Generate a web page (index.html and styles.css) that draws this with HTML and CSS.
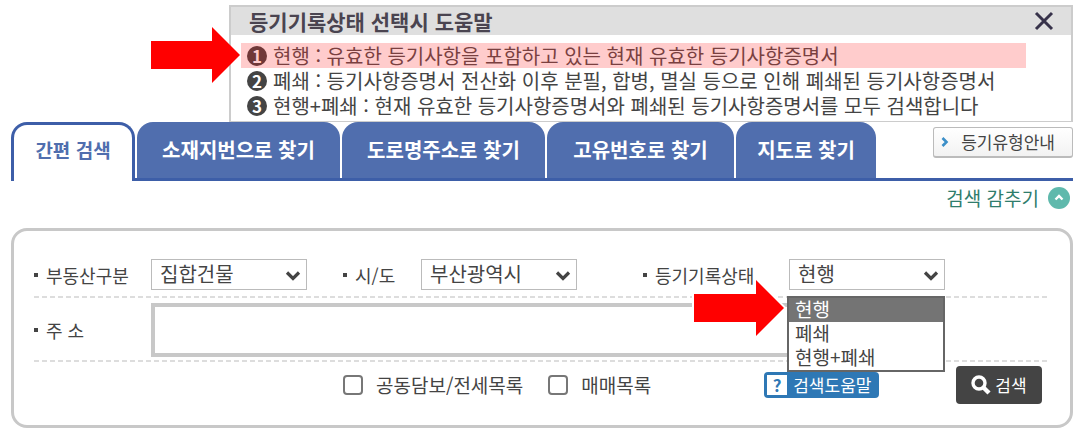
FILE: index.html
```html
<!DOCTYPE html>
<html lang="ko">
<head>
<meta charset="utf-8">
<title>부동산 등기 검색</title>
<link rel="stylesheet" href="styles.css">
</head>
<body>
<main class="page">
  <section class="help">
    <header class="help-head">
      <h2 class="help-title">등기기록상태 선택시 도움말</h2>
      <button class="close" type="button" aria-label="닫기">
        <svg width="20" height="20" viewBox="0 0 20 20"><path d="M2 2L18 18M18 2L2 18" fill="none" stroke="#37324a" stroke-width="3"/></svg>
      </button>
    </header>
    <ol class="help-list">
      <li class="help-item marked">
        <svg class="arrow arrow-help" width="90" height="58" viewBox="0 0 90 58"><path d="M0 15H61V1L89 29L61 57V43H0Z" fill="#f00"/></svg>
        <span class="num">1</span>현행 : 유효한 등기사항을 포함하고 있는 현재 유효한 등기사항증명서
      </li>
      <li class="help-item"><span class="num">2</span>폐쇄 : 등기사항증명서 전산화 이후 분필, 합병, 멸실 등으로 인해 폐쇄된 등기사항증명서</li>
      <li class="help-item"><span class="num">3</span>현행+폐쇄 : 현재 유효한 등기사항증명서와 폐쇄된 등기사항증명서를 모두 검색합니다</li>
    </ol>
  </section>

  <nav class="tabs">
    <a class="tab active" href="#simple">간편 검색</a>
    <a class="tab wide" href="#lot">소재지번으로 찾기</a>
    <a class="tab wide" href="#road">도로명주소로 찾기</a>
    <a class="tab medium" href="#number">고유번호로 찾기</a>
    <a class="tab narrow" href="#map">지도로 찾기</a>
    <button class="guide" type="button">
      <svg width="8" height="10" viewBox="0 0 8 10"><path d="M1.5 1L5.5 5L1.5 9" fill="none" stroke="#3c8fc8" stroke-width="2.6"/></svg>
      등기유형안내
    </button>
  </nav>

  <div class="toggle-row">
    <button class="toggle" type="button">
      검색 감추기
      <svg width="22" height="22" viewBox="0 0 22 22"><circle cx="11" cy="11" r="11" fill="#5fb9ac"/><path d="M7.5 12.5L11 9L14.5 12.5" fill="none" stroke="#fff" stroke-width="2.4"/></svg>
    </button>
  </div>

  <form class="panel">
    <div class="row row-filters">
      <label class="label label-main" for="kind">부동산구분</label>
      <span class="combo">
        <select id="kind"><option>집합건물</option></select>
        <svg class="chevron" width="16" height="12" viewBox="0 0 16 12"><path d="M2 2.5L8 8.5L14 2.5" fill="none" stroke="#444" stroke-width="3.2"/></svg>
      </span>
      <label class="label label-city" for="city">시/도</label>
      <span class="combo">
        <select id="city"><option>부산광역시</option></select>
        <svg class="chevron" width="16" height="12" viewBox="0 0 16 12"><path d="M2 2.5L8 8.5L14 2.5" fill="none" stroke="#444" stroke-width="3.2"/></svg>
      </span>
      <label class="label label-state" for="state">등기기록상태</label>
      <span class="combo">
        <select id="state"><option>현행</option><option>폐쇄</option><option>현행+폐쇄</option></select>
        <svg class="chevron" width="16" height="12" viewBox="0 0 16 12"><path d="M2 2.5L8 8.5L14 2.5" fill="none" stroke="#444" stroke-width="3.2"/></svg>
        <ul class="menu" role="listbox" aria-label="등기기록상태">
          <li class="option selected" role="option" aria-selected="true">현행</li>
          <li class="option" role="option" aria-selected="false">폐쇄</li>
          <li class="option" role="option" aria-selected="false">현행+폐쇄</li>
        </ul>
        <svg class="arrow arrow-menu" width="94" height="62" viewBox="0 0 94 62"><path d="M2 17H64V3L92 31L64 59V45H2Z" fill="#f00" stroke="#fff" stroke-width="4" paint-order="stroke"/></svg>
      </span>
    </div>
    <div class="row row-address">
      <label class="label label-main" for="address">주 소</label>
      <input class="address" id="address" type="text">
    </div>
    <div class="actions">
      <label class="check"><input type="checkbox">공동담보/전세목록</label>
      <label class="check"><input type="checkbox">매매목록</label>
      <button class="tip" type="button"><span class="tip-mark">?</span>검색도움말</button>
      <button class="search" type="submit">
        <svg width="20" height="20" viewBox="0 0 20 20"><circle cx="8" cy="8" r="6" fill="none" stroke="#fff" stroke-width="3.4"/><path d="M12.2 12.2L18 18" stroke="#fff" stroke-width="4.4"/></svg>
        검색
      </button>
    </div>
  </form>
</main>
</body>
</html>
```

FILE: styles.css
```css
* {
  box-sizing: border-box;
}

body {
  margin: 0;
  background: #fff;
  color: #444;
  font-family: "Noto Sans CJK KR", sans-serif;
  font-size: 18px;
  line-height: 24px;
}

button,
input,
select {
  font-family: inherit;
  line-height: inherit;
  color: inherit;
  margin: 0;
}

button {
  cursor: pointer;
  white-space: nowrap;
}

svg {
  flex: none;
}

.page {
  padding: 5px 11px 7px;
}

/* Help box */
.help {
  margin-left: 218px;
  border: 2px solid #ccc;
  border-bottom-width: 1px;
}

.help-head {
  display: flex;
  align-items: center;
  justify-content: space-between;
  height: 28px;
  padding: 0 17px 0 18px;
  background: #dfdfdf;
}

.help-title {
  margin: 0;
  font-size: 21px;
  line-height: 26px;
  color: #4a4450;
}

.close {
  display: flex;
  padding: 0;
  border: 0;
  background: none;
}

.help-list {
  margin: 0;
  padding: 8px 45px 3px 10px;
  list-style: none;
}

.help-item {
  position: relative;
  display: flex;
  align-items: center;
  gap: 6px;
  height: 25px;
  padding-left: 6px;
  font-size: 20px;
  white-space: nowrap;
}

.marked {
  background: #fcc;
  color: #7a4040;
}

.num {
  display: flex;
  flex: none;
  align-items: center;
  justify-content: center;
  width: 20px;
  height: 20px;
  border-radius: 50%;
  background: #444;
  color: #fff;
  font-size: 17px;
  font-weight: 700;
  line-height: 20px;
}

.marked .num {
  background: #703838;
  color: #fcc;
}

.arrow {
  position: absolute;
  right: 100%;
}

.arrow-help {
  top: -17px;
}

.arrow-menu {
  top: 18px;
  z-index: 3;
  margin-right: 3px;
}

/* Tabs */
.tabs {
  display: flex;
  align-items: flex-start;
  gap: 2px;
  border-bottom: 3px solid #3d5ea8;
}

.tab {
  display: flex;
  align-items: center;
  justify-content: center;
  height: 56px;
  border-radius: 16px 16px 0 0;
  background: #506eae;
  color: #fff;
  font-size: 20px;
  font-weight: 700;
  text-decoration: none;
  white-space: nowrap;
}

.active {
  width: 124px;
  height: 59px;
  margin-bottom: -3px;
  padding-bottom: 6px;
  border: 3px solid #3d5ea8;
  border-bottom: 0;
  background: #fff;
  color: #506eae;
  font-size: 19px;
}

.wide {
  width: 203px;
}

.medium {
  width: 187px;
}

.narrow {
  width: 140px;
}

.guide {
  display: flex;
  align-items: center;
  justify-content: space-between;
  width: 140px;
  height: 31px;
  margin: 5px 0 0 auto;
  padding: 0 17px 0 7px;
  border: 1px solid #bbb;
  border-bottom-width: 2px;
  border-radius: 3px;
  background: linear-gradient(#fff, #f2f2f2);
  font-size: 17px;
}

.toggle-row {
  display: flex;
  justify-content: flex-end;
  padding: 6px 3px 19px 0;
}

.toggle {
  display: flex;
  align-items: center;
  gap: 9px;
  height: 22px;
  padding: 0;
  border: 0;
  background: none;
  color: #2f7d6c;
  font-size: 19px;
}

/* Search form */
.panel {
  padding: 0 20px;
  border: 3px solid #c8c8c8;
  border-radius: 16px;
}

.row {
  display: flex;
  align-items: center;
  background: repeating-linear-gradient(90deg, #ddd 0 5px, transparent 5px 8px) bottom / 100% 2px no-repeat;
}

.row-filters {
  padding: 28px 0 8px;
}

.row-address {
  padding: 5px 0;
}

.label {
  display: flex;
  align-items: center;
  gap: 8px;
  font-size: 18px;
  white-space: nowrap;
}

.label::before {
  content: "";
  width: 4px;
  height: 4px;
  background: #444;
}

.label-main {
  width: 117px;
}

.label-city {
  width: 78px;
  margin-left: 36px;
}

.label-state {
  width: 146px;
  margin-left: 66px;
}

.combo {
  position: relative;
  width: 156px;
}

.combo select {
  display: block;
  width: 100%;
  height: 31px;
  padding: 0 30px 2px 8px;
  border: 1px solid #bbb;
  border-radius: 0;
  background: #fff;
  font-size: 20px;
  appearance: none;
}

.chevron {
  position: absolute;
  top: 11px;
  right: 6px;
  pointer-events: none;
}

.menu {
  position: absolute;
  top: 37px;
  left: -2px;
  z-index: 2;
  width: 158px;
  margin: 0;
  padding: 0;
  border: 2px solid #666;
  background: #fff;
  list-style: none;
}

.option {
  height: 24px;
  padding-left: 6px;
  font-size: 19px;
  line-height: 22px;
}

.selected {
  background: #747474;
  color: #fff;
}

.address {
  width: 780px;
  height: 54px;
  padding: 0 8px;
  border: 4px solid #c8c8c8;
  background: #fff;
  font-size: 20px;
}

.actions {
  display: flex;
  align-items: center;
  padding: 4px 8px 21px 309px;
}

.check {
  display: flex;
  align-items: center;
  gap: 13px;
  margin-right: 25px;
  font-size: 19px;
  white-space: nowrap;
}

.check input {
  width: 20px;
  height: 20px;
  border: 2px solid #777;
  border-radius: 4px;
  background: #fff;
  appearance: none;
}

.tip {
  display: flex;
  align-items: center;
  gap: 6px;
  height: 26px;
  margin-left: 88px;
  padding: 0 8px 0 3px;
  border: 0;
  border-radius: 4px;
  background: #2e78b5;
  color: #fff;
  font-size: 17px;
}

.tip-mark {
  width: 20px;
  height: 20px;
  background: #fff;
  color: #2e78b5;
  font-weight: 700;
  line-height: 20px;
}

.search {
  display: flex;
  align-items: center;
  justify-content: center;
  gap: 4px;
  width: 86px;
  height: 38px;
  margin-left: auto;
  padding: 0;
  border: 0;
  border-radius: 4px;
  background: #444;
  color: #fff;
  font-size: 17px;
}
```
